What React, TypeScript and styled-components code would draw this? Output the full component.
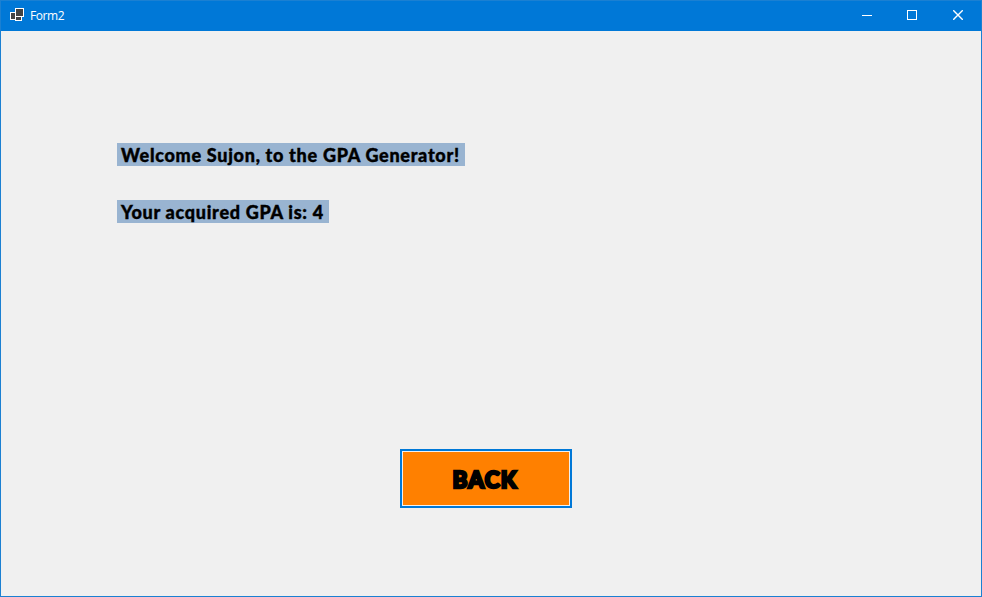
import React from "react";
import styled, { createGlobalStyle } from "styled-components";

const GlobalStyle = createGlobalStyle`
  *, *::before, *::after { box-sizing: border-box; }
  body { margin: 0; }
`;

const Window = styled.main`
  display: flex;
  flex-direction: column;
  width: 982px;
  height: 597px;
  background: #f0f0f0;
  border: 1px solid #1b80d2;
  overflow: hidden;
`;

const TitleBar = styled.header`
  display: flex;
  align-items: center;
  height: 30px;
  flex: none;
  background: #0078d7;
  color: #fff;
`;

const AppIcon = styled.svg`
  width: 16px;
  height: 16px;
  margin-left: 8px;
`;

const Title = styled.span`
  flex: 1;
  margin-left: 5px;
  font: 12px/16px "Open Sans", sans-serif;
  letter-spacing: -0.4px;
`;

const CaptionButtons = styled.div`
  display: flex;
`;

const CaptionButton = styled.button`
  display: flex;
  align-items: center;
  justify-content: center;
  width: 46px;
  height: 30px;
  padding: 0 0 2px;
  border: 0;
  background: transparent;
  color: #fff;

  svg { display: block; }
`;

const Client = styled.section`
  display: flex;
  flex-direction: column;
  align-items: flex-start;
  flex: 1;
  padding: 112px 0 0 116px;
`;

const Labels = styled.div`
  display: flex;
  flex-direction: column;
  align-items: flex-start;
  gap: 34px;
`;

const Label = styled.div<{ $width: number }>`
  width: ${(p) => p.$width}px;
  height: 23px;
  padding-left: 4px;
  background: #99b4d1;
  color: #000;
  font: 900 18px/25px Lato, sans-serif;
  letter-spacing: 0.71px;
  -webkit-text-stroke: 0.4px #000;
  white-space: nowrap;
`;

const BackButton = styled.button`
  width: 172px;
  height: 59px;
  margin: 226px 0 0 283px;
  padding: 2px 2px 0 0;
  border: 2px solid #0078d7;
  box-shadow: inset 0 0 0 1px #f0f0f0;
  background: #ff8000;
  color: #000;
  font: 900 22.5px/30px Lato, sans-serif;
  letter-spacing: 1.2px;
  -webkit-text-stroke: 2.4px #000;
`;

export default function App() {
  return (
    <>
      <GlobalStyle />
      <Window>
        <TitleBar>
          <AppIcon viewBox="0 0 16 16" shapeRendering="crispEdges" fill="#424242" stroke="#fff">
            <rect x="1.5" y="4.5" width="5" height="7" />
            <rect x="6.5" y="8.5" width="6" height="4" />
            <rect x="6.5" y="0.5" width="8" height="8" />
          </AppIcon>
          <Title>Form2</Title>
          <CaptionButtons>
            <CaptionButton aria-label="Minimize">
              <svg width="12" height="10" shapeRendering="crispEdges">
                <rect x="2" y="5" width="10" height="1" fill="#fff" />
              </svg>
            </CaptionButton>
            <CaptionButton aria-label="Maximize">
              <svg width="10" height="10" shapeRendering="crispEdges">
                <rect x="0.5" y="0.5" width="9" height="9" fill="none" stroke="#fff" />
              </svg>
            </CaptionButton>
            <CaptionButton aria-label="Close">
              <svg width="10" height="10">
                <path d="M0.2 0.2 9.8 9.8M9.8 0.2 0.2 9.8" stroke="#fff" strokeWidth="1.4" />
              </svg>
            </CaptionButton>
          </CaptionButtons>
        </TitleBar>
        <Client>
          <Labels>
            <Label $width={348}>Welcome Sujon, to the GPA Generator!</Label>
            <Label $width={212}>Your acquired GPA is: 4</Label>
          </Labels>
          <BackButton>BACK</BackButton>
        </Client>
      </Window>
    </>
  );
}
